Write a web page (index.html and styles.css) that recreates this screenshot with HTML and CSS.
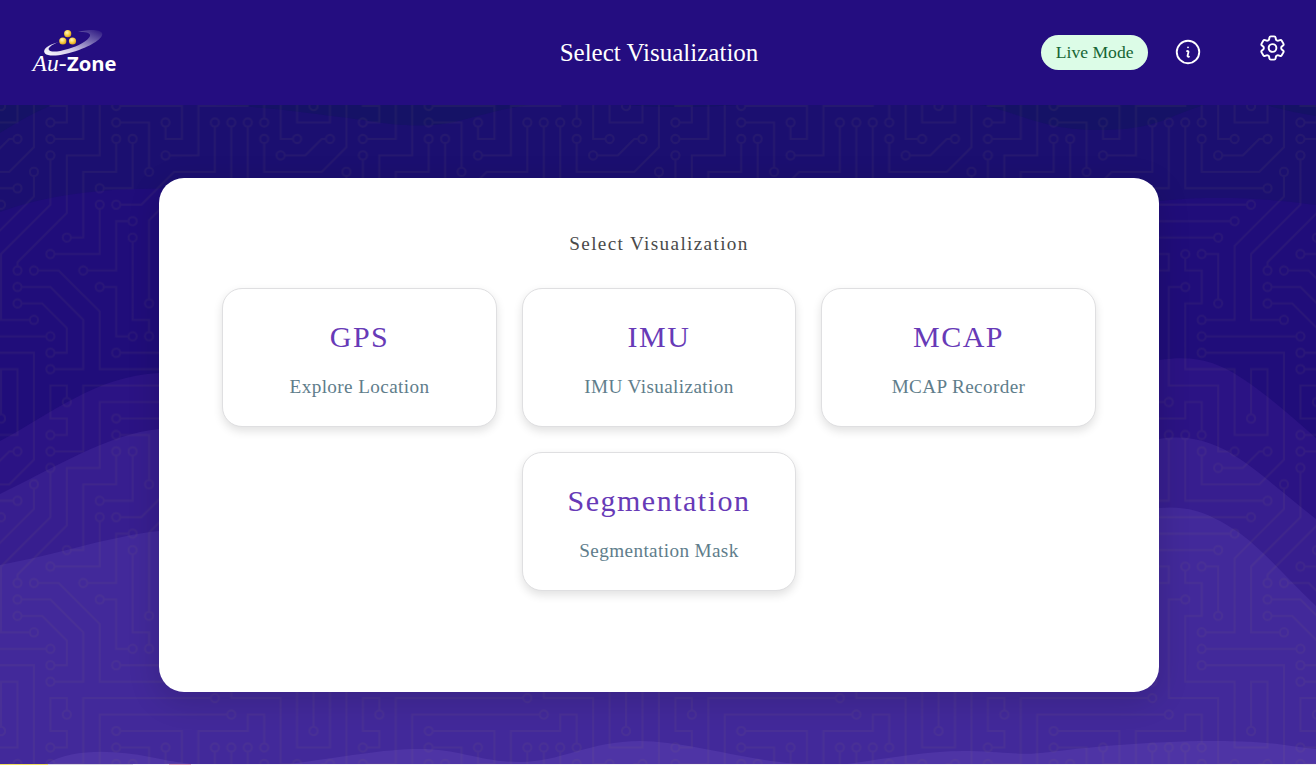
FILE: index.html
```html
<!DOCTYPE html>
<html lang="en">
<head>
<meta charset="utf-8">
<title>Select Visualization</title>
<link rel="stylesheet" href="styles.css">
</head>
<body>
<div class="app">
  <header class="header">
    <div class="header-side">
      <svg class="logo" viewBox="0 0 90 50" width="90" height="50" role="img" aria-label="Au-Zone">
        <defs>
          <linearGradient id="swoosh" x1="0" y1="1" x2="1" y2="0">
            <stop offset="0" stop-color="#fff"/><stop offset=".35" stop-color="#cfc8e6"/><stop offset=".7" stop-color="#6f62ac"/><stop offset="1" stop-color="#28127f"/>
          </linearGradient>
          <radialGradient id="gold" cx=".4" cy=".35" r=".65">
            <stop offset="0" stop-color="#fff6c0"/><stop offset=".55" stop-color="#fbd24a"/><stop offset="1" stop-color="#dba01c"/>
          </radialGradient>
        </defs>
        <path fill="url(#swoosh)" d="M29 14C17 17 12 22 15 25.500c4 4 19 2 34-3.500 16-6 25-13 23-17-2-3.500-12-4-24-1 8-.5 13 1 12 4-2 5-12 10-22 13-10 3-17 3.500-19 1-1.500-2 2-5 10-8z"/>
        <circle cx="37.700" cy="5.700" r="3.600" fill="url(#gold)"/><circle cx="32.800" cy="13" r="3.600" fill="url(#gold)"/><circle cx="42.500" cy="13" r="3.600" fill="url(#gold)"/>
        <text class="logo-au" x="2.500" y="43" textLength="34" lengthAdjust="spacingAndGlyphs">Au-</text>
        <text class="logo-zone" x="37" y="43" textLength="49.500" lengthAdjust="spacingAndGlyphs">Zone</text>
      </svg>
    </div>
    <h1 class="header-title">Select Visualization</h1>
    <div class="header-side header-actions">
      <span class="mode-pill">Live Mode</span>
      <svg class="icon icon-info" viewBox="0 0 24 24"><path d="m11.25 11.25.041-.02a.75.75 0 0 1 1.063.852l-.708 2.836a.75.75 0 0 0 1.063.853l.041-.021M21 12a9 9 0 1 1-18 0 9 9 0 0 1 18 0Zm-9-3.750h.008v.008H12V8.250Z"/></svg>
      <svg class="icon icon-gear" viewBox="0 0 24 24"><path d="M9.594 3.940c.09-.542.56-.94 1.110-.94h2.593c.55 0 1.020.398 1.110.94l.213 1.281c.063.374.313.686.645.87.074.04.147.083.22.127.325.196.72.257 1.075.124l1.217-.456a1.125 1.125 0 0 1 1.370.49l1.296 2.247a1.125 1.125 0 0 1-.26 1.431l-1.003.827c-.293.241-.438.613-.43.992a7.723 7.723 0 0 1 0 .255c-.008.378.137.75.43.991l1.004.827c.424.35.534.955.26 1.430l-1.298 2.247a1.125 1.125 0 0 1-1.369.491l-1.217-.456c-.355-.133-.75-.072-1.076.124a6.470 6.470 0 0 1-.22.128c-.331.183-.581.495-.644.869l-.213 1.281c-.09.543-.56.94-1.110.94h-2.594c-.55 0-1.019-.398-1.110-.94l-.213-1.281c-.062-.374-.312-.686-.644-.87a6.520 6.520 0 0 1-.22-.127c-.325-.196-.72-.257-1.076-.124l-1.217.456a1.125 1.125 0 0 1-1.369-.49l-1.297-2.247a1.125 1.125 0 0 1 .26-1.431l1.004-.827c.292-.24.437-.613.43-.991a6.932 6.932 0 0 1 0-.255c.007-.38-.138-.751-.43-.992l-1.004-.827a1.125 1.125 0 0 1-.26-1.430l1.297-2.247a1.125 1.125 0 0 1 1.370-.491l1.216.456c.356.133.751.072 1.076-.124.072-.044.146-.086.22-.128.332-.183.582-.495.644-.869l.214-1.280ZM15 12a3 3 0 1 1-6 0 3 3 0 0 1 6 0Z"/></svg>
    </div>
  </header>

  <main class="main">
    <svg class="backdrop" viewBox="0 105 1316 659" aria-hidden="true">
      <defs>
        <pattern id="circuit" width="304" height="304" patternUnits="userSpaceOnUse" patternTransform="translate(0 105) scale(1.028)">
          <path id="traces" class="traces" d="M44.1 224a5 5 0 1 1 0 2H0v-2h44.1zm160 48a5 5 0 1 1 0 2H82v-2h122.1zm57.8-46a5 5 0 1 1 0-2H304v2h-42.1zm0 16a5 5 0 1 1 0-2H304v2h-42.1zm6.2-114a5 5 0 1 1 0 2h-86.2a5 5 0 1 1 0-2h86.2zm-256-48a5 5 0 1 1 0 2H0v-2h12.1zm185.8 34a5 5 0 1 1 0-2h86.2a5 5 0 1 1 0 2h-86.2zM258 12.1a5 5 0 1 1-2 0V0h2v12.1zm-64 208a5 5 0 1 1-2 0v-54.2a5 5 0 1 1 2 0v54.2zm48-198.2V80h62v2h-64V21.9a5 5 0 1 1 2 0zm16 16V64h46v2h-48V37.9a5 5 0 1 1 2 0zm-128 96V208h16v12.1a5 5 0 1 1-2 0V210h-16v-76.1a5 5 0 1 1 2 0zm-5.9-21.9a5 5 0 1 1 0 2H114v48H85.9a5 5 0 1 1 0-2H112v-48h12.1zm-6.2 130a5 5 0 1 1 0-2H176v-74.1a5 5 0 1 1 2 0V242h-60.1zm-16-64a5 5 0 1 1 0-2H114v48h10.1a5 5 0 1 1 0 2H112v-48h-10.1zM66 284.1a5 5 0 1 1-2 0V274H50v30h-2v-32h18v12.1zM236.1 176a5 5 0 1 1 0 2H226v94h48v32h-2v-30h-48v-98h12.1zm25.8-30a5 5 0 1 1 0-2H274v44.1a5 5 0 1 1-2 0V146h-10.1zm-64 96a5 5 0 1 1 0-2H208v-80h16v-14h-42.1a5 5 0 1 1 0-2H226v18h-16v80h-12.1zm86.2-210a5 5 0 1 1 0 2H272V0h2v32h10.1zM98 101.9V146H53.9a5 5 0 1 1 0-2H96v-42.1a5 5 0 1 1 2 0zM53.9 34a5 5 0 1 1 0-2H80V0h2v34H53.9zm60.1 3.9V66H82v64H69.9a5 5 0 1 1 0-2H80V64h32V37.9a5 5 0 1 1 2 0zM101.9 82a5 5 0 1 1 0-2H128V37.9a5 5 0 1 1 2 0V82h-28.1zm16-64a5 5 0 1 1 0-2H146v44.1a5 5 0 1 1-2 0V18h-26.1zm102.2 270a5 5 0 1 1 0 2H98v14h-2v-16h124.1zM242 149.9V160h16v34h-16v62h48v48h-2v-46h-48v-66h16v-30h-16v-12.1a5 5 0 1 1 2 0zM53.9 18a5 5 0 1 1 0-2H64V2H48V0h18v18H53.9zm112 32a5 5 0 1 1 0-2H192V0h50v2h-48v48h-28.1zm-48-48a5 5 0 0 1-9.8-2h2.07a3 3 0 1 0 5.66 0H178v34h-18V21.9a5 5 0 1 1 2 0V32h14V2h-58.1zm0 96a5 5 0 1 1 0-2H137l32-32h39V21.9a5 5 0 1 1 2 0V66h-40.17l-32 32H117.9zm28.1 90.1a5 5 0 1 1-2 0v-76.51L175.59 80H224V21.9a5 5 0 1 1 2 0V82h-49.59L146 112.41v75.69zm16 32a5 5 0 1 1-2 0v-99.51L184.59 96H300.1a5 5 0 0 1 3.9-3.9v2.07a3 3 0 0 0 0 5.66v2.07a5 5 0 0 1-3.9-3.9H185.41L162 121.41v98.69zm-144-64a5 5 0 1 1-2 0v-3.51l48-48V48h32V0h2v50H66v55.41l-48 48v2.69zM50 53.9v43.51l-48 48V208h26.1a5 5 0 1 1 0 2H0v-65.41l48-48V53.9a5 5 0 1 1 2 0zm-16 16V89.41l-34 34v-2.82l32-32V69.9a5 5 0 1 1 2 0zM12.1 32a5 5 0 1 1 0 2H9.41L0 43.41V40.6L8.59 32h3.51zm265.8 18a5 5 0 1 1 0-2h18.69l7.41-7.41v2.82L297.41 50H277.9zm-16 160a5 5 0 1 1 0-2H288v-71.41l16-16v2.82l-14 14V210h-28.1zm-208 32a5 5 0 1 1 0-2H64v-22.59L40.59 194H21.9a5 5 0 1 1 0-2H41.41L66 216.59V242H53.9zm150.2 14a5 5 0 1 1 0 2H96v-56.6L56.6 162H37.9a5 5 0 1 1 0-2h19.5L98 200.6V256h106.1zm-150.2 2a5 5 0 1 1 0-2H80v-46.59L48.59 178H21.9a5 5 0 1 1 0-2H49.41L82 208.59V258H53.9zM34 39.8v1.61L9.41 66H0v-2h8.59L32 40.59V0h2v39.8zM2 300.1a5 5 0 0 1 3.9 3.9H3.83A3 3 0 0 0 0 302.17V256h18v48h-2v-46H2v42.1zM34 241v63h-2v-62H0v-2h34v1zM17 18H0v-2h16V0h2v18h-1zm273-2h14v2h-16V0h2v16zm-32 273v15h-2v-14h-14v14h-2v-16h18v1zM0 92.1A5.02 5.02 0 0 1 6 97a5 5 0 0 1-6 4.9v-2.07a3 3 0 1 0 0-5.66V92.1zM80 272h2v32h-2v-32zm37.9 32h-2.07a3 3 0 0 0-5.66 0h-2.07a5 5 0 0 1 9.8 0zM5.9 0A5.02 5.02 0 0 1 0 5.9V3.83A3 3 0 0 0 3.83 0H5.9zm294.2 0h2.07A3 3 0 0 0 304 3.83V5.9a5 5 0 0 1-3.9-5.9zm3.9 300.1v2.07a3 3 0 0 0-1.83 1.83h-2.07a5 5 0 0 1 3.9-3.9z"/>
        </pattern>
      </defs>
      <rect class="wave-base" y="105" width="1316" height="660"/>
      <path class="wave-1" d="M0 105H1316V205C1280 200 1250 198 1220 198S1180 199 1159 201L900 240 300 210Q200 188 159 188.500C100 189 50 194 0 212Z"/>
      <path class="wave-0" d="M0 105H52Q28 115 0 133ZM215 105C270 107 300 112 340 117S390 126 425 125.500 480 112 530 105ZM620 105H740Q680 109 620 105ZM980 105C1020 112 1040 130 1100 130S1170 114 1205 105ZM1266 105H1316V116Q1290 112 1266 105Z"/>
      <path class="wave-2" d="M0 441C50 415 95 376 159 373L659 450 1159 360C1195 355 1215 361 1240 377S1290 415 1316 438V765H0Z"/>
      <path class="wave-3" d="M0 494C50 470 110 433 159 429L659 480 1159 439C1190 434 1215 442 1240 459S1290 499 1316 519V765H0Z"/>
      <path class="wave-4" d="M0 565C60 554 110 536 159 531L659 600 1159 508C1190 505 1210 514 1235 530S1285 577 1316 606V765H0Z"/>
      <path class="wave-5" d="M45 765C70 748 115 750 150 757S175 761 195 765ZM280 765C340 758 380 749 420 749S480 762 520 762 590 741 640 741 760 765 820 765ZM840 765C890 758 930 750 970 751S1020 756 1050 752 1150 741 1210 741 1280 745 1316 749V765Z"/>
      <rect class="circuit" y="105" width="1316" height="660" fill="url(#circuit)"/>
    </svg>
    <section class="panel">
      <h2 class="panel-title">Select Visualization</h2>
      <div class="cards">
        <a class="card"><h3 class="card-title">GPS</h3><p class="card-text">Explore Location</p></a>
        <a class="card"><h3 class="card-title">IMU</h3><p class="card-text">IMU Visualization</p></a>
        <a class="card"><h3 class="card-title">MCAP</h3><p class="card-text">MCAP Recorder</p></a>
        <a class="card"><h3 class="card-title">Segmentation</h3><p class="card-text">Segmentation Mask</p></a>
      </div>
    </section>
  </main>
  <div class="edge"></div>
</div>
<script src="circuit.js"></script>
</body>
</html>
```
FILE: styles.css
```css
* { box-sizing: border-box; }
body { margin: 0; font-family: "Liberation Serif", "Times New Roman", serif; }
h1, h2, h3, p { margin: 0; font-weight: 400; }
.app { display: flex; flex-direction: column; height: 765px; overflow: hidden; }

.header { display: flex; align-items: center; flex: 0 0 105px; padding: 0 28px 0 30px; background: #240d80; color: #fff; }
.header-side { display: flex; align-items: center; flex: 1 1 0; }
.header-title { font-size: 25px; line-height: 36px; }
.header-actions { justify-content: flex-end; }
.logo { display: block; }
.logo-au { font: italic 23px "Liberation Serif", serif; fill: #fff; }
.logo-zone { font: bold 20px "Open Sans", sans-serif; fill: #fff; }
.mode-pill { padding: 0 14.500px; border-radius: 18px; background: #dcfce7; color: #166534; font-size: 17.600px; line-height: 35px; }
.icon { fill: none; stroke: #fff; stroke-width: 1.5; stroke-linecap: round; stroke-linejoin: round; }
.icon-info { width: 30px; height: 30px; margin: 0 0 1px 25px; }
.icon-gear { width: 31px; height: 32px; margin: 0 0 10px 54px; }

.main { display: grid; flex: 1; justify-items: center; align-content: start; }
.backdrop { grid-area: 1 / 1; display: block; width: 1316px; height: 659px; }
.wave-base { fill: #200d7a; }
.wave-0 { fill: #151266; }
.wave-1 { fill: #1b0f70; }
.wave-2 { fill: #2b1384; }
.wave-3 { fill: #371e8f; }
.wave-4 { fill: #42299a; }
.wave-5 { fill: #4e34a5; }
.traces { fill: #8d7a68; }
.circuit { opacity: .09; }

.panel { grid-area: 1 / 1; z-index: 1; width: 1000px; height: 514px; margin: 73px 0 0 2px; padding: 51px 62px; border-radius: 25px; background: #fff; box-shadow: 0 8px 32px rgba(0, 0, 0, .15); text-align: center; }
.panel-title { color: #4a4a4a; font-size: 19.200px; line-height: 30px; letter-spacing: 1.35px; }
.cards { display: flex; flex-wrap: wrap; justify-content: center; gap: 25px; margin-top: 29px; }
.card { width: 274.500px; height: 139.200px; padding: 27px 0; border: 1px solid #dfdfe1; border-radius: 20px; background: #fff; box-shadow: 0 4px 10px rgba(0, 0, 0, .12); }
.card-title { color: #673ab7; font-size: 30px; line-height: 42px; letter-spacing: 1.5px; }
.card-text { margin-top: 15px; color: #607d8b; font-size: 19.200px; line-height: 28px; letter-spacing: .38px; }
.edge { flex: 0 0 1px; background: linear-gradient(90deg, #f0e060 48px, #d8d4e0 48px 133px, #f2f0f6 133px 169px, #e8b8c8 169px 191px, #f3f1f5 191px); }
```
FILE: circuit.js
```js
// Open the centre of every node pad in the circuit pattern.
const pads = [[49,225],[209,273],[257,225],[257,241],[273,129],[177,129],[17,81],[193,113],[289,113],[257,17],[193,225],[193,161],[241,17],[257,33],[129,129],[145,225],[129,113],[81,161],[113,241],[177,161],[97,177],[129,225],[65,289],[241,177],[257,145],[273,193],[193,241],[177,145],[289,33],[97,97],[49,145],[49,33],[113,33],[65,129],[97,81],[129,33],[113,17],[145,65],[225,289],[241,145],[49,17],[161,49],[161,17],[113,97],[209,17],[145,193],[225,17],[161,225],[17,161],[33,209],[49,49],[33,65],[17,33],[273,49],[257,209],[49,241],[17,193],[209,257],[33,161],[49,257],[17,177]];
const traces = document.getElementById('traces');
const holes = pads.map(([x, y]) => `M${x} ${y + 3}a3 3 0 1 0 0-6 3 3 0 0 0 0 6z`).join('');
traces.setAttribute('d', traces.getAttribute('d') + holes);
```
